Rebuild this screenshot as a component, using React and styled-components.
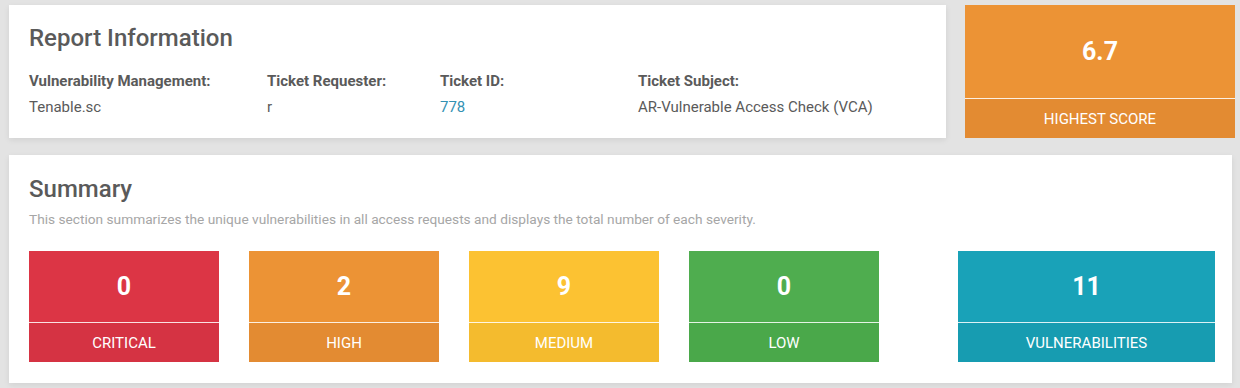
import React from 'react'
import styled, { createGlobalStyle } from 'styled-components'

const GlobalStyle = createGlobalStyle`
  html, body {
    margin: 0;
    padding: 0;
    background: #e3e3e3;
    font-family: Roboto, "Liberation Sans", Arial, sans-serif;
  }
`

const colors = {
  critical: ['#dc3545', '#d53343'],
  high: ['#ec9335', '#e38b32'],
  medium: ['#fcc232', '#f4bb2e'],
  low: ['#4fad4f', '#4aa84a'],
  total: ['#19a2b8', '#179cb1'],
}

const fields = [
  { label: 'Vulnerability Management:', value: 'Tenable.sc', width: 238 },
  { label: 'Ticket Requester:', value: 'r', width: 173 },
  { label: 'Ticket ID:', value: '778', width: 198, link: true },
  { label: 'Ticket Subject:', value: 'AR-Vulnerable Access Check (VCA)' },
]

const severities = [
  { key: 'critical', count: 0, label: 'Critical' },
  { key: 'high', count: 2, label: 'High' },
  { key: 'medium', count: 9, label: 'Medium' },
  { key: 'low', count: 0, label: 'Low' },
]

const Stat = ({ tone, value, label, width, tall }) => (
  <Tile width={width}>
    <TileTop color={colors[tone][0]} tall={tall}>{value}</TileTop>
    <TileBottom color={colors[tone][1]}>{label}</TileBottom>
  </Tile>
)

const App = () => {
  return (
    <Page>
      <GlobalStyle />
      <TopRow>
        <InfoCard>
          <Title>Report Information</Title>
          <Fields>
            {fields.map(f => (
              <Field key={f.label} width={f.width}>
                <Label>{f.label}</Label>
                <Value link={f.link}>{f.value}</Value>
              </Field>
            ))}
          </Fields>
        </InfoCard>
        <Stat tone="high" value="6.7" label="Highest Score" width={270} tall />
      </TopRow>

      <SummaryCard>
        <Title>Summary</Title>
        <Description>
          This section summarizes the unique vulnerabilities in all access requests and displays the total number of each severity.
        </Description>
        <Tiles>
          {severities.map(s => (
            <Stat key={s.key} tone={s.key} value={s.count} label={s.label} width={190} />
          ))}
          <Spacer />
          <Stat tone="total" value={11} label="Vulnerabilities" width={257} />
        </Tiles>
      </SummaryCard>
    </Page>
  )
}

export default App

const Page = styled.div`
  width: 1240px;
  height: 388px;
  box-sizing: border-box;
  padding: 5px 0 0 9px;
  display: flex;
  flex-direction: column;
  gap: 17px;
`

const TopRow = styled.div`
  display: flex;
  gap: 19px;
  height: 133px;
`

const Card = styled.div`
  background: #fff;
  box-sizing: border-box;
  box-shadow: 0 2px 6px rgba(0, 0, 0, 0.08);
`

const InfoCard = styled(Card)`
  width: 937px;
  padding: 18px 20px 0 20px;
`

const SummaryCard = styled(Card)`
  width: 1223px;
  height: 228px;
  padding: 19px 17px 0 20px;
`

const Title = styled.h2`
  margin: 0;
  font-size: 24px;
  font-weight: 500;
  line-height: 30px;
  color: #5a5a5a;
`

const Fields = styled.div`
  display: flex;
  margin-top: 19px;
`

const Field = styled.div`
  width: ${p => (p.width ? `${p.width}px` : 'auto')};
  flex: ${p => (p.width ? 'none' : '1')};
  display: flex;
  flex-direction: column;
  gap: 8px;
`

const Label = styled.div`
  font-size: 15px;
  font-weight: 700;
  line-height: 18px;
  color: #5a5a5a;
`

const Value = styled.div`
  font-size: 15px;
  line-height: 18px;
  color: ${p => (p.link ? '#3391b3' : '#5a5a5a')};
`

const Description = styled.p`
  margin: 7px 0 0;
  font-size: 13.7px;
  line-height: 16px;
  color: #a6a6a6;
`

const Tiles = styled.div`
  display: flex;
  gap: 30px;
  margin-top: 24px;
`

const Spacer = styled.div`
  flex: 1;
  margin-left: -30px;
`

const Tile = styled.div`
  width: ${p => p.width}px;
  display: flex;
  flex-direction: column;
  color: #fff;
  text-align: center;
`

const TileTop = styled.div`
  height: ${p => (p.tall ? 94 : 71)}px;
  background: ${p => p.color};
  border-bottom: 1px solid rgba(255, 255, 255, 0.85);
  display: flex;
  align-items: center;
  justify-content: center;
  font-size: 25px;
  font-weight: 700;
`

const TileBottom = styled.div`
  height: 39px;
  background: ${p => p.color};
  display: flex;
  align-items: center;
  justify-content: center;
  font-size: 15px;
  font-weight: 400;
  text-transform: uppercase;
`
